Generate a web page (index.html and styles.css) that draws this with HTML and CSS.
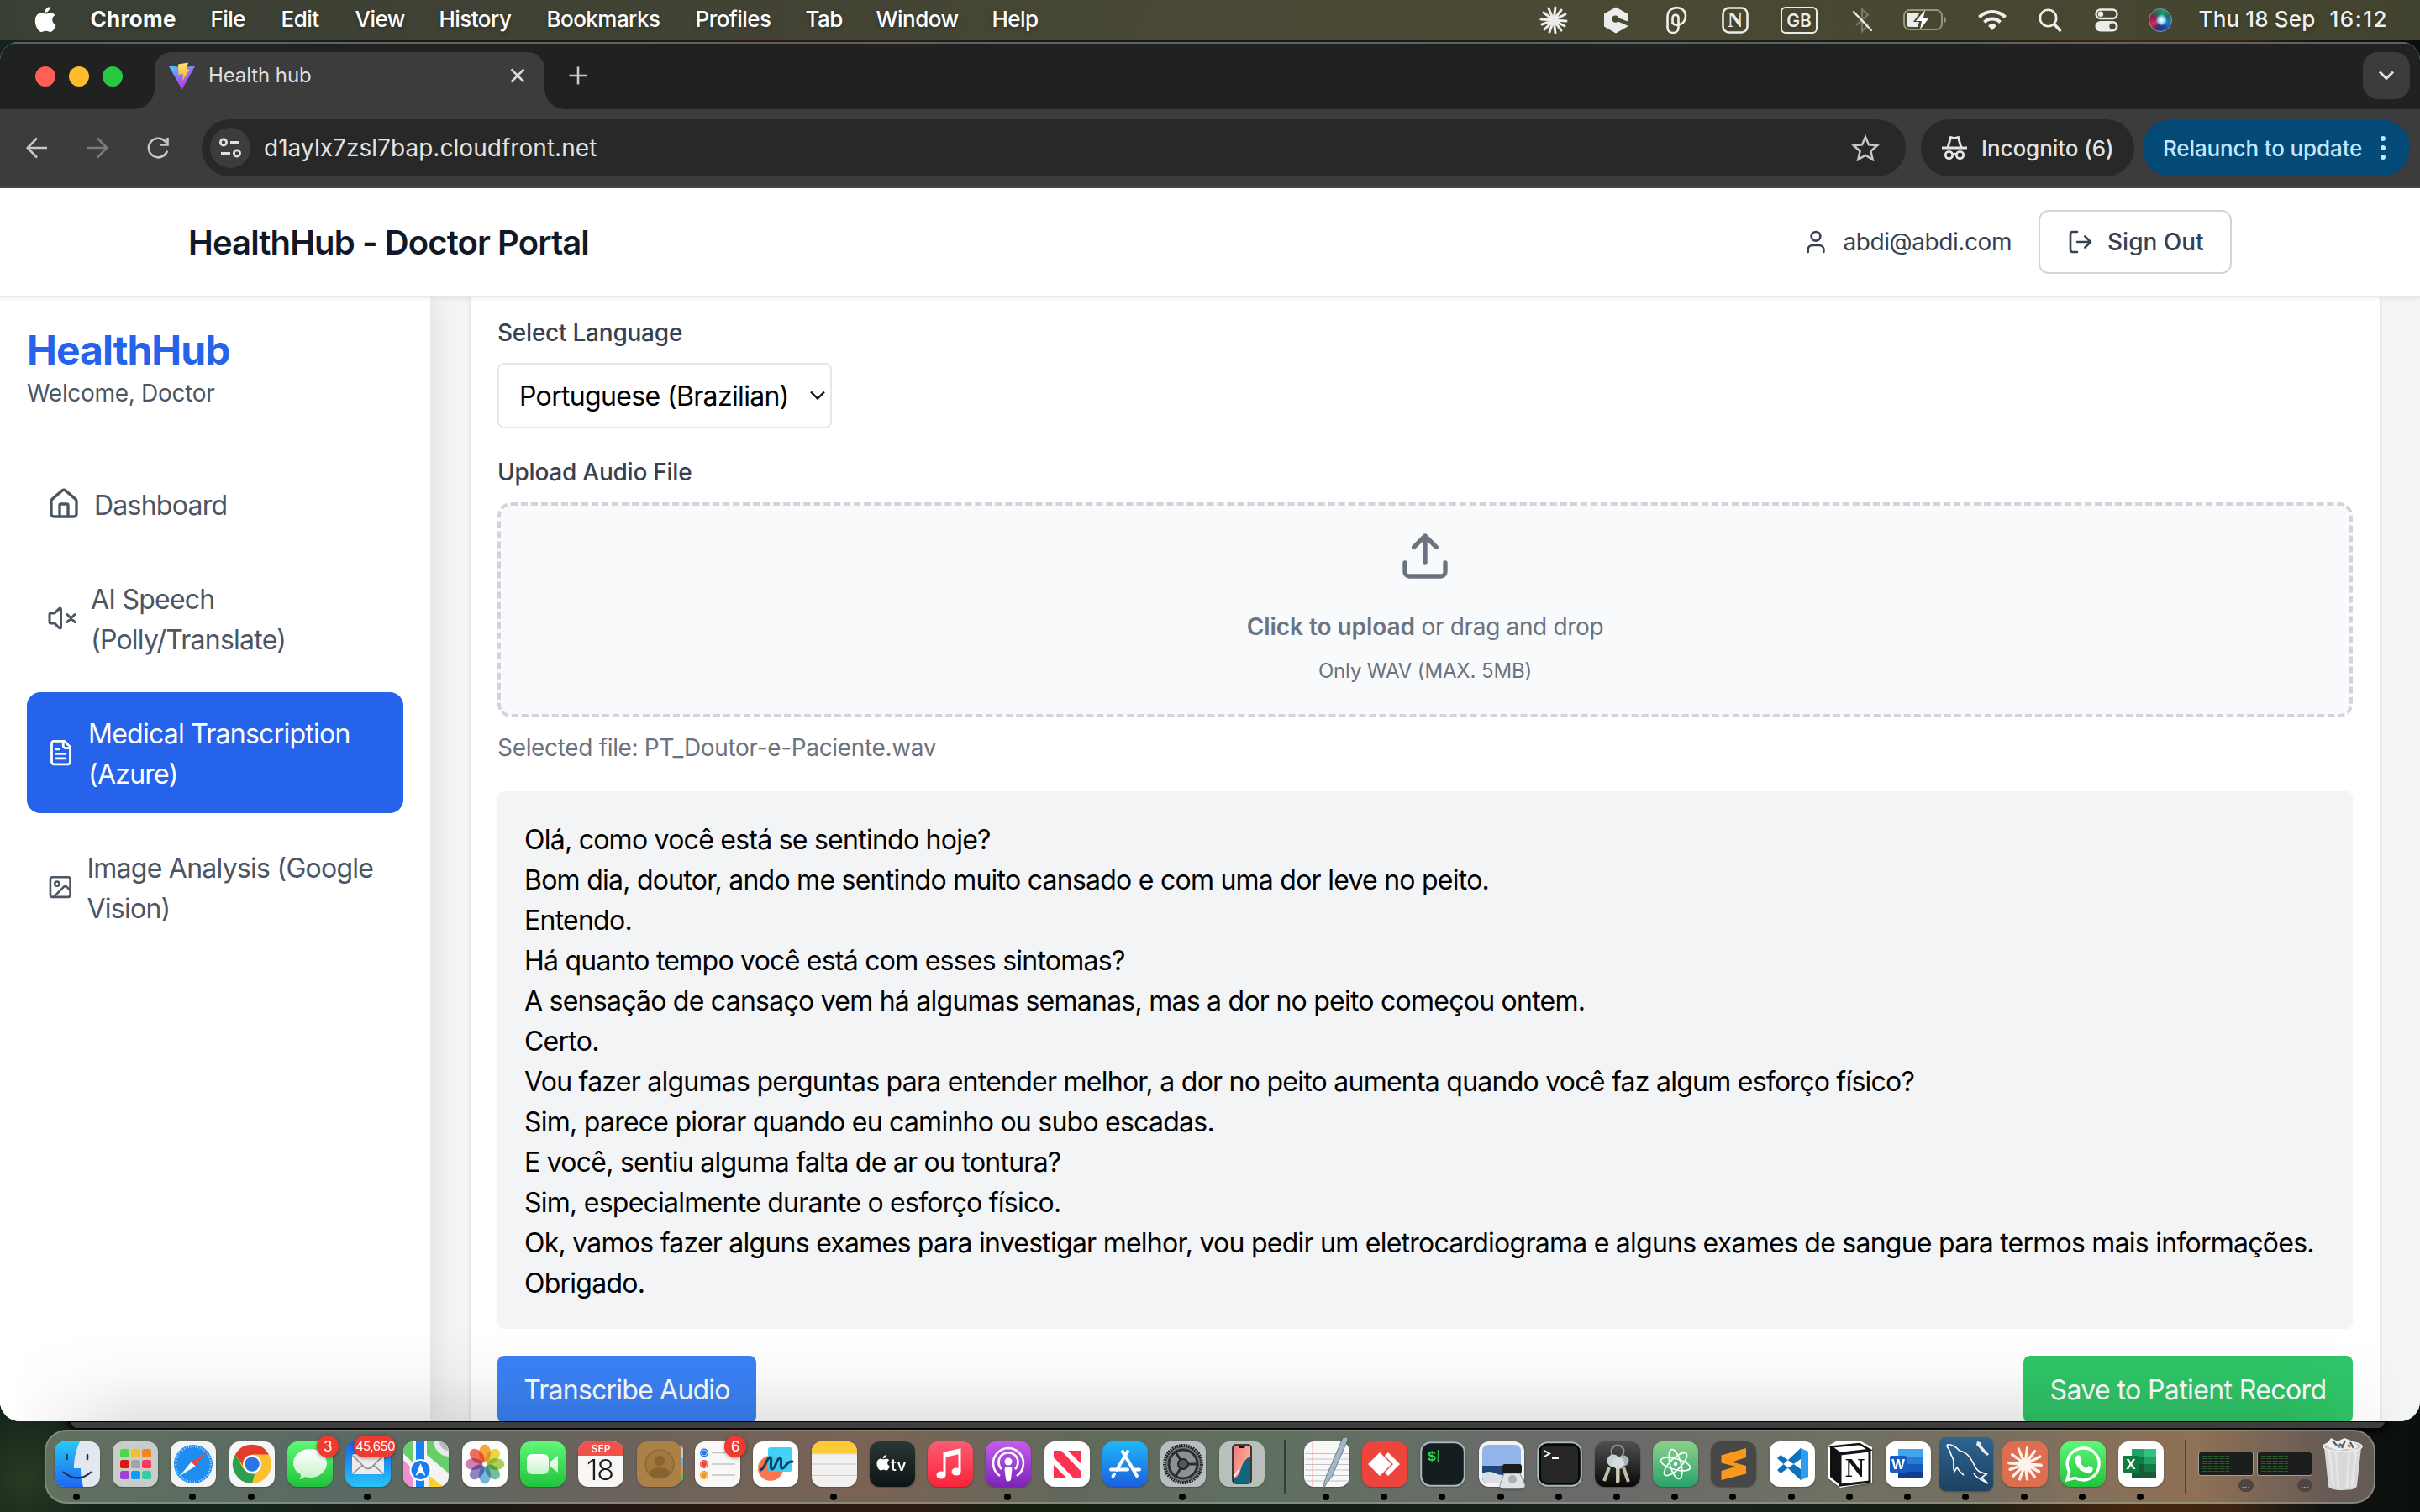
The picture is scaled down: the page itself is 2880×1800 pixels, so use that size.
FILE: index.html
```html
<!DOCTYPE html>
<html lang="en">
<head>
<meta charset="utf-8">
<title>Health hub</title>
<link rel="stylesheet" href="styles.css">
</head>
<body>
<div class="desktop">

<header class="menubar">
  <nav class="menus">
    <svg class="apple" viewBox="0 0 26 30"><path d="M18.6 0c.2 3.600-2.800 7-6.200 6.900C12.200 3.500 15.300.2 18.600 0zM13.400 8.600c1.400 0 3-1.500 5.600-1.400 2.300.1 4.200 1.100 5.500 2.900-4.900 3.100-4 9.600 1 11.600C24 26 21.700 29.800 19 29.900c-2 .1-2.900-1.200-5.300-1.200-2.500 0-3.400 1.200-5.300 1.200C4.800 30 .8 22.900.8 16.900.8 10.900 4.500 7.400 8.300 7.300c2.200 0 3.800 1.300 5.100 1.300z"/></svg>
    <b>Chrome</b><span>File</span><span>Edit</span><span>View</span><span>History</span><span>Bookmarks</span><span>Profiles</span><span>Tab</span><span>Window</span><span>Help</span>
  </nav>
  <div class="status">
    <svg width="34" height="34" viewBox="-17 -17 34 34" stroke="#ececea" stroke-width="3" stroke-linecap="round"><path d="M0 0L-6-14M0 0L2-15M0 0L9-12M0 0L14-7M0 0L15 1M0 0L13 7M0 0L9 12M0 0L2 15M0 0L-5 14M0 0L-11 11M0 0L-14 5M0 0L-15-1M0 0L-12-9"/></svg>
    <svg width="28" height="32" viewBox="0 0 28 32"><path d="M14 .5L28 8.500v9L17.500 13.500a4.200 4.200 0 1 0-1 4L28 22.500v1L14 31.500 0 23.500v-15z" fill="#ececea"/></svg>
    <svg width="26" height="34" viewBox="0 0 26 34" fill="none" stroke="#f0f0ee" stroke-width="2.600"><path d="M8.500 21V14.500c0-5 7-5 7 0V26c0 8-13 8-13 0V13C2.500-1.500 24-1 24 11.500 24 20 18 23.500 12 22.500c-2.500-.4-3.500-1-3.500-3"/></svg>
    <svg width="32" height="34" viewBox="0 0 32 34"><rect x="1.500" y="2.500" width="29" height="29" rx="7" fill="none" stroke="#ececea" stroke-width="2.600"/><text x="16" y="25" class="menu-n">N</text></svg>
    <svg width="44" height="34" viewBox="0 0 44 34"><rect x="1" y="2" width="42" height="30" rx="5" fill="none" stroke="#ececea" stroke-width="2"/><text x="22" y="24.500" class="menu-gb">GB</text></svg>
    <svg width="24" height="32" viewBox="0 0 24 32" fill="none" stroke-width="2.200"><path d="M3 9l15 13-7 7V3l7 6.500L4 22" stroke="#797967"/><path d="M1 6l21 22" stroke="#ececea" stroke-linecap="round"/></svg>
    <svg width="52" height="28" viewBox="0 0 52 28"><rect x="1" y="2" width="45" height="23" rx="6.500" fill="none" stroke="#94947f" stroke-width="2"/><path d="M48 9c4 2 4 7 0 9z" fill="#94947f"/><path d="M8 5h12L12 16h7l-2 6H8a4 4 0 0 1-4-4V9a4 4 0 0 1 4-4z" fill="#ececea"/><path d="M26 2L15 15h7l-2 10L31 11h-7z" fill="#fff"/></svg>
    <svg width="36" height="28" viewBox="0 0 36 28" fill="none" stroke="#f0f0ee" stroke-width="4"><path d="M2.500 10.500a22 22 0 0 1 31 0M8.500 16.500a13.500 13.500 0 0 1 19 0"/><path d="M18 26l-5-5.500a7.300 7.300 0 0 1 10 0z" fill="#f0f0ee" stroke="none"/></svg>
    <svg width="28" height="28" viewBox="0 0 28 28" fill="none" stroke="#f0f0ee" stroke-linecap="round"><circle cx="11.500" cy="11.500" r="9.700" stroke-width="2.600"/><path d="M19 19l6.500 7" stroke-width="3.400"/></svg>
    <svg width="28" height="28" viewBox="0 0 28 28"><rect x="1.500" y="1.500" width="25" height="10.500" rx="5.200" fill="none" stroke="#ececea" stroke-width="2.400"/><circle cx="7" cy="6.700" r="3.200" fill="#ececea"/><rect x=".5" y="15" width="27" height="12.500" rx="6.200" fill="#ececea"/><circle cx="21" cy="21.200" r="3.600" fill="#47462f"/></svg>
    <span class="siri"></span>
    <span class="date">Thu 18 Sep</span><span class="clock">16:12</span>
  </div>
</header>

<main class="window">
  <div class="tabstrip">
    <div class="lights"><i class="red"></i><i class="yellow"></i><i class="green"></i></div>
    <div class="tab">
      <svg width="33" height="33" viewBox="0 0 33 33"><defs><linearGradient id="v1" x1="0" y1="0" x2=".6" y2="1"><stop offset="0" stop-color="#41d1ff"/><stop offset=".9" stop-color="#bd34fe"/></linearGradient><linearGradient id="v2" x1="0" y1="0" x2="0" y2="1"><stop offset="0" stop-color="#ffea83"/><stop offset="1" stop-color="#ffa800"/></linearGradient></defs><path d="M.5 4L16.500 32.500 32.500 4 18 6.500z" fill="url(#v1)"/><path d="M12 2.500L24 .5 21.500 9l4-.5L17 23l1-9-5.500 1z" fill="url(#v2)"/></svg>
      <span>Health hub</span>
      <svg width="18" height="18" viewBox="0 0 18 18" fill="none" stroke="#dcdcdc" stroke-width="2.500"><path d="M1.500 1.500l15 15M16.500 1.500l-15 15"/></svg>
    </div>
    <svg class="plus" width="22" height="22" viewBox="0 0 22 22" fill="none" stroke="#c9c9c9" stroke-width="2.600"><path d="M11 .5v21M.5 11h21"/></svg>
    <div class="tabsearch"><svg width="20" height="12" viewBox="0 0 20 12" fill="none" stroke="#e3e3e3" stroke-width="3"><path d="M2 1.500l8 8 8-8"/></svg></div>
  </div>
  <div class="toolbar">
    <svg class="nav-ico" viewBox="0 0 26 26" fill="none" stroke="#c7c7c7" stroke-width="2.600"><path d="M25 13H2M13 1.500L1.800 13 13 24.500"/></svg>
    <svg class="nav-ico" viewBox="0 0 26 26" fill="none" stroke="#7b7b7b" stroke-width="2.600"><path d="M1 13h23M13 1.500L24.200 13 13 24.500"/></svg>
    <svg class="nav-ico" viewBox="0 0 26 26" fill="none" stroke="#c7c7c7" stroke-width="2.600"><path d="M24 16.500A11.300 11.300 0 1 1 22.500 6.500M24.500 1v8.500H16"/></svg>
    <div class="omnibox">
      <span class="site-info"><svg width="26" height="24" viewBox="0 0 26 24" fill="none" stroke="#e0e0e0" stroke-width="2.800"><circle cx="5" cy="5.500" r="3.600"/><path d="M13 5.500h11M2 18.500h11"/><circle cx="21" cy="18.500" r="3.600"/></svg></span>
      <span class="url">d1aylx7zsl7bap.cloudfront.net</span>
      <svg width="34" height="32" viewBox="0 0 34 32" fill="none" stroke="#c7c7c7" stroke-width="2.500"><path d="M17 3l4 9.400 10 .9-7.600 6.700 2.300 10L17 24.700 8.300 30l2.300-10L3 13.300l10-.9z"/></svg>
    </div>
    <div class="incog"><svg width="30" height="30" viewBox="0 0 30 30" fill="none" stroke="#e3e3e3" stroke-width="2.800"><path d="M0 15h30M7 15l3.500-12.500 4.500 1 4.500-1L23 15"/><circle cx="8.500" cy="23.500" r="4.200"/><circle cx="21.500" cy="23.500" r="4.200"/><path d="M12.500 23q2.500-1.500 5 0"/></svg><span>Incognito (6)</span></div>
    <div class="relaunch"><span>Relaunch to update</span><i></i></div>
  </div>

  <div class="page-header">
    <h1>HealthHub - Doctor Portal</h1>
    <div class="account">
      <svg width="32" height="32" viewBox="0 0 24 24" class="line"><path d="M19 21v-2a4 4 0 0 0-4-4H9a4 4 0 0 0-4 4v2"/><circle cx="12" cy="7" r="4"/></svg>
      <span class="email">abdi@abdi.com</span>
      <button class="signout"><svg width="32" height="32" viewBox="0 0 24 24" class="line"><path d="M9 21H5a2 2 0 0 1-2-2V5a2 2 0 0 1 2-2h4M16 17l5-5-5-5M21 12H9"/></svg><span>Sign Out</span></button>
    </div>
  </div>

  <div class="body">
    <aside class="sidebar">
      <h2>HealthHub</h2>
      <p class="welcome">Welcome, Doctor</p>
      <nav class="side-nav">
        <a class="item"><svg width="40" height="40" viewBox="0 0 24 24" class="line"><path d="M15 21v-8a1 1 0 0 0-1-1h-4a1 1 0 0 0-1 1v8"/><path d="M3 10a2 2 0 0 1 .709-1.528l7-5.999a2 2 0 0 1 2.582 0l7 5.999A2 2 0 0 1 21 10v9a2 2 0 0 1-2 2H5a2 2 0 0 1-2-2z"/></svg><span>Dashboard</span></a>
        <a class="item"><svg width="36" height="40" viewBox="0 0 24 24" class="line"><path d="M11 4.702a.705.705 0 0 0-1.203-.498L6.413 7.587A1.400 1.400 0 0 1 5.416 8H3a1 1 0 0 0-1 1v6a1 1 0 0 0 1 1h2.416a1.400 1.400 0 0 1 .997.413l3.383 3.384A.705.705 0 0 0 11 19.298zM22 9l-6 6M16 9l6 6"/></svg><span>AI Speech<br>(Polly/Translate)</span></a>
        <a class="item active"><svg width="33" height="40" viewBox="0 0 24 24" class="line"><path d="M15 2H6a2 2 0 0 0-2 2v16a2 2 0 0 0 2 2h12a2 2 0 0 0 2-2V7z"/><path d="M14 2v4a2 2 0 0 0 2 2h4M10 9H8M16 13H8M16 17H8"/></svg><span>Medical Transcription<br>(Azure)</span></a>
        <a class="item"><svg width="31.500" height="40" viewBox="0 0 24 24" class="line"><rect width="18" height="18" x="3" y="3" rx="2"/><circle cx="9" cy="9" r="2"/><path d="m21 15-3.086-3.086a2 2 0 0 0-2.828 0L6 21"/></svg><span>Image Analysis (Google<br>Vision)</span></a>
      </nav>
    </aside>
    <section class="content">
      <div class="card">
        <label>Select Language</label>
        <div class="select"><span>Portuguese (Brazilian)</span><svg width="20" height="12" viewBox="0 0 20 12" fill="none" stroke="#111" stroke-width="2.400"><path d="M2 1.500l8 8 8-8"/></svg></div>
        <label>Upload Audio File</label>
        <div class="dropzone">
          <svg width="64" height="64" viewBox="0 0 24 24" class="line"><path d="M21 15v4a2 2 0 0 1-2 2H5a2 2 0 0 1-2-2v-4M17 8l-5-5-5 5M12 3v12"/></svg>
          <p class="hint"><b>Click to upload</b> or drag and drop</p>
          <p class="limit">Only WAV (MAX. 5MB)</p>
        </div>
        <p class="selected">Selected file: PT_Doutor-e-Paciente.wav</p>
        <div class="transcript">Olá, como você está se sentindo hoje?
Bom dia, doutor, ando me sentindo muito cansado e com uma dor leve no peito.
Entendo.
Há quanto tempo você está com esses sintomas?
A sensação de cansaço vem há algumas semanas, mas a dor no peito começou ontem.
Certo.
Vou fazer algumas perguntas para entender melhor, a dor no peito aumenta quando você faz algum esforço físico?
Sim, parece piorar quando eu caminho ou subo escadas.
E você, sentiu alguma falta de ar ou tontura?
Sim, especialmente durante o esforço físico.
Ok, vamos fazer alguns exames para investigar melhor, vou pedir um eletrocardiograma e alguns exames de sangue para termos mais informações.
Obrigado.</div>
        <div class="actions"><button class="btn blue">Transcribe Audio</button><button class="btn green">Save to Patient Record</button></div>
      </div>
    </section>
  </div>
</main>
<div class="behind"></div>

<footer class="dock">
  <div class="apps">
    <div class="app on"><svg viewBox="0 0 54 54"><defs><linearGradient id="a1" x1="0" y1="0" x2="0" y2="1"><stop offset="0" stop-color="#27c8fb"/><stop offset="1" stop-color="#1e68f0"/></linearGradient><clipPath id="sq"><rect width="54" height="54" rx="12"/></clipPath></defs><g clip-path="url(#sq)"><rect width="54" height="54" fill="#e3e8f0"/><path d="M0 0h30c-4 9-7 20-7 32h8q0 12 3 22H0z" fill="url(#a1)"/><path d="M14.500 16v5M39 16v5" stroke="#16324f" stroke-width="2.600" stroke-linecap="round"/><path d="M10 36q17 15 34 0" fill="none" stroke="#16324f" stroke-width="2.200"/></g></svg></div>
    <div class="app"><svg viewBox="0 0 54 54"><rect width="54" height="54" rx="12" fill="#c9cdca"/><rect x="9" y="9" width="11" height="10" rx="2.500" fill="#43dc46"/><rect x="22" y="9" width="11" height="10" rx="2.500" fill="#f8bd2a"/><rect x="35" y="9" width="11" height="10" rx="2.500" fill="#f5861f"/><rect x="9" y="22" width="11" height="10" rx="2.500" fill="#d8190f"/><rect x="22" y="22" width="11" height="10" rx="2.500" fill="#a0a5a7"/><rect x="35" y="22" width="11" height="10" rx="2.500" fill="#fb3859"/><rect x="9" y="35" width="11" height="10" rx="2.500" fill="#a33fd8"/><rect x="22" y="35" width="11" height="10" rx="2.500" fill="#0f9bf8"/><rect x="35" y="35" width="11" height="10" rx="2.500" fill="#35cea4"/></svg></div>
    <div class="app on"><svg viewBox="0 0 54 54"><rect width="54" height="54" rx="12" fill="#f3f3f3"/><circle cx="27" cy="27" r="23" fill="#1d8df0"/><circle cx="27" cy="27" r="21" fill="none" stroke="#b9e0fd" stroke-width="2.400" stroke-dasharray=".8 2"/><path d="M43 13L24.500 24.500l5 5z" fill="#f0453a"/><path d="M11 41l13.500-16.500 5 5z" fill="#fff"/></svg></div>
    <div class="app on"><svg viewBox="0 0 54 54"><rect width="54" height="54" rx="12" fill="#f6f6f6"/><circle cx="27" cy="27" r="23" fill="#fcbf30"/><path d="M7 15.500A23 23 0 0 1 47 15.500H27l-9 16z" fill="#e33b2e"/><path d="M7 15.500L17 33l10 6 3 0L27 50A23 23 0 0 1 7 15.500z" fill="#2da04d"/><circle cx="27" cy="27" r="11" fill="#fff"/><circle cx="27" cy="27" r="8.800" fill="#2a76e8"/></svg></div>
    <div class="app"><svg viewBox="0 0 54 54"><defs><linearGradient id="g1" x1="0" y1="0" x2="0" y2="1"><stop offset="0" stop-color="#5ff777"/><stop offset="1" stop-color="#22c33c"/></linearGradient><linearGradient id="wg" x1="0" y1="0" x2="0" y2="1"><stop offset="0" stop-color="#fff"/><stop offset="1" stop-color="#c6f3c9"/></linearGradient></defs><rect width="54" height="54" rx="12" fill="url(#g1)"/><path d="M27 9c11 0 20 7.500 20 17s-9 17-20 17q-3 0-6-1-3 3-7 3 3-3 1.500-6C10 36 7 31 7 26 7 16.500 16 9 27 9z" fill="url(#wg)"/></svg><em>3</em></div>
    <div class="app on"><svg viewBox="0 0 54 54"><defs><linearGradient id="m1" x1="0" y1="0" x2="0" y2="1"><stop offset="0" stop-color="#1c62e8"/><stop offset="1" stop-color="#28c4fa"/></linearGradient></defs><rect width="54" height="54" rx="12" fill="url(#m1)"/><rect x="8" y="15" width="38" height="24" rx="3" fill="#ececec"/><path d="M9 17l14 14q4 3 8 0l14-14M9 38l12-10M45 38L33 28" fill="none" stroke="#8a8a8a" stroke-width="1.600"/></svg><em class="wide">45,650</em></div>
    <div class="app"><svg viewBox="0 0 54 54"><g clip-path="url(#sq)"><rect width="54" height="54" fill="#f3f3f3"/><path d="M0 0h12v26L0 14zM28 0h26v38L28 16z" fill="#67cf68"/><path d="M54 0v18A19 19 0 0 1 36 0z" fill="#e8e8ea"/><path d="M54 0v11A11 11 0 0 1 43 0z" fill="#b8b8bd"/><path d="M0 22l12 12v20H0z" fill="#ee8fd0"/><path d="M30 54V40l18 14z" fill="#fbd02f"/><path d="M15 0h10v54H15z" fill="#1b80f6"/><circle cx="20.500" cy="34" r="13" fill="#fff"/><circle cx="20.500" cy="34" r="11" fill="#1a7cf3"/><path d="M20.500 26l6 15-6-4-6 4z" fill="#fff"/></g></svg></div>
    <div class="app"><svg viewBox="0 0 54 54"><rect width="54" height="54" rx="12" fill="#fdfdfd"/><g class="petals"><ellipse cx="27" cy="14" rx="7" ry="10.500" fill="#f79a1c"/><ellipse cx="27" cy="14" rx="7" ry="10.500" fill="#e3d51f" transform="rotate(45 27 27)"/><ellipse cx="27" cy="14" rx="7" ry="10.500" fill="#9ac93f" transform="rotate(90 27 27)"/><ellipse cx="27" cy="14" rx="7" ry="10.500" fill="#5bb58c" transform="rotate(135 27 27)"/><ellipse cx="27" cy="14" rx="7" ry="10.500" fill="#63a8dc" transform="rotate(180 27 27)"/><ellipse cx="27" cy="14" rx="7" ry="10.500" fill="#7a72bd" transform="rotate(225 27 27)"/><ellipse cx="27" cy="14" rx="7" ry="10.500" fill="#c66ba6" transform="rotate(270 27 27)"/><ellipse cx="27" cy="14" rx="7" ry="10.500" fill="#ee5340" transform="rotate(315 27 27)"/></g></svg></div>
    <div class="app"><svg viewBox="0 0 54 54"><rect width="54" height="54" rx="12" fill="url(#g1)"/><rect x="8" y="15" width="26" height="24" rx="6" fill="url(#wg)"/><path d="M36 24l9-7v20l-9-7z" fill="url(#wg)"/></svg></div>
    <div class="app"><svg viewBox="0 0 54 54"><g clip-path="url(#sq)"><rect width="54" height="54" fill="#f8f7f5"/><rect width="54" height="17" fill="#f0524b"/></g><text x="27" y="13" class="cal-m">SEP</text><text x="26" y="45.500" class="cal-d">18</text></svg></div>
    <div class="app"><svg viewBox="0 0 54 54"><path d="M40 6h12q3 0 3 4v10H40z" fill="#c5cbd0"/><path d="M40 20h15v10H40z" fill="#5cb5e8"/><path d="M40 30h15v8H40z" fill="#f3902c"/><path d="M40 38h15v6q0 3-3 3H40z" fill="#49ca61"/><rect width="53" height="54" rx="12" fill="#ab8148"/><circle cx="27" cy="27" r="17" fill="#a1783f" stroke="#87632f" stroke-width="1.200"/><circle cx="27" cy="23" r="6" fill="#87632f"/><path d="M14 38q3-7 13-7t13 7q-6 6-13 6t-13-6z" fill="#87632f"/></svg></div>
    <div class="app"><svg viewBox="0 0 54 54"><rect width="54" height="54" rx="12" fill="#f9f8f7"/><g fill="none" stroke-width="1.400"><circle cx="11" cy="13.500" r="4.300" stroke="#1a7cf3"/><circle cx="11" cy="27" r="4.300" stroke="#ee3f35"/><circle cx="11" cy="40" r="4.300" stroke="#f3941f"/><path d="M20 13.500h28M20 27h28M20 40h28" stroke="#c4c4c4"/></g><circle cx="11" cy="13.500" r="2.900" fill="#1a7cf3"/><circle cx="11" cy="27" r="2.900" fill="#ee3f35"/><circle cx="11" cy="40" r="2.900" fill="#f3941f"/></svg><em>6</em></div>
    <div class="app"><svg viewBox="0 0 54 54"><rect width="54" height="54" rx="12" fill="#fff"/><circle cx="21" cy="32" r="15" fill="#fb7650"/><rect x="18" y="7" width="29" height="29" rx="3" fill="#35cdf4" opacity=".93"/><path d="M9 34c6-2 6-12 11-15 4 0-1 14 3 14s5-13 9-13-1 12 3 12 5-9 12-8" fill="none" stroke="#0c4166" stroke-width="3" stroke-linecap="round"/></svg></div>
    <div class="app on"><svg viewBox="0 0 54 54"><g clip-path="url(#sq)"><rect width="54" height="54" fill="#f2f1ef"/><rect width="54" height="14" fill="#fcca35"/><path d="M0 15h54M0 27h54M0 40.500h54" stroke="#c9c9c9" stroke-width="1.200"/></g></svg></div>
    <div class="app"><svg viewBox="0 0 54 54"><defs><linearGradient id="tv" x1="0" y1="0" x2="0" y2="1"><stop offset="0" stop-color="#273934"/><stop offset="1" stop-color="#0d1415"/></linearGradient></defs><rect width="54" height="54" rx="12" fill="url(#tv)"/><path transform="translate(8 16) scale(.62)" fill="#fff" d="M18.600 0c.2 3.600-2.800 7-6.200 6.900C12.200 3.500 15.300.2 18.600 0zM13.400 8.600c1.400 0 3-1.500 5.600-1.400 2.300.1 4.200 1.100 5.500 2.900-4.900 3.100-4 9.600 1 11.600C24 26 21.700 29.800 19 29.900c-2 .1-2.900-1.200-5.300-1.200-2.500 0-3.400 1.200-5.300 1.200C4.800 30 .8 22.900.8 16.900.8 10.900 4.500 7.400 8.300 7.300c2.200 0 3.800 1.300 5.100 1.300z"/><text x="25" y="34.500" class="tvt">tv</text></svg></div>
    <div class="app"><svg viewBox="0 0 54 54"><defs><linearGradient id="mu" x1="0" y1="0" x2="0" y2="1"><stop offset="0" stop-color="#fb5c74"/><stop offset="1" stop-color="#fa2339"/></linearGradient></defs><rect width="54" height="54" rx="12" fill="url(#mu)"/><path d="M20 40V14l18-4v26" fill="none" stroke="#fff" stroke-width="3"/><path d="M20 13l18-4v6l-18 4z" fill="#fff"/><ellipse cx="16" cy="40" rx="5.500" ry="4.500" fill="#fff"/><ellipse cx="34" cy="36" rx="5.500" ry="4.500" fill="#fff"/></svg></div>
    <div class="app on"><svg viewBox="0 0 54 54"><defs><linearGradient id="po" x1="0" y1="0" x2="0" y2="1"><stop offset="0" stop-color="#c55ced"/><stop offset="1" stop-color="#7a25b8"/></linearGradient></defs><rect width="54" height="54" rx="12" fill="url(#po)"/><g fill="none" stroke="#fff" stroke-width="2.600"><path d="M17 41a18 18 0 1 1 20 0"/><path d="M19 33a11.500 11.500 0 1 1 16 0"/></g><circle cx="27" cy="24" r="4.500" fill="#fff"/><path d="M22.500 33q0-3 4.500-3t4.500 3l-1.500 12q-.5 2.500-3 2.500t-3-2.500z" fill="#fff"/></svg></div>
    <div class="app"><svg viewBox="0 0 54 54"><rect width="54" height="54" rx="12" fill="#fff"/><path d="M11 11h9l23 24v8h-9L11 19zM28 11h15v15zM11 28l15 15H11z" fill="#fb3353"/></svg></div>
    <div class="app"><svg viewBox="0 0 54 54"><defs><linearGradient id="as" x1="0" y1="0" x2="0" y2="1"><stop offset="0" stop-color="#1fb8f6"/><stop offset="1" stop-color="#1c5fe0"/></linearGradient></defs><rect width="54" height="54" rx="12" fill="url(#as)"/><path d="M24 12l17 29M30 12L17 34M14 39l-1.500 2.500M10 33.500h20M37 33.500h7" fill="none" stroke="#fff" stroke-width="4" stroke-linecap="round"/></svg></div>
    <div class="app on"><svg viewBox="0 0 54 54"><rect width="54" height="54" rx="12" fill="#b7bec2"/><circle cx="27" cy="27" r="22" fill="#777a7d" stroke="#232425" stroke-width="4" stroke-dasharray="1.800 1"/><circle cx="27" cy="27" r="17" fill="#8e9194" stroke="#2c2d2f" stroke-width="3"/><circle cx="27" cy="27" r="6" fill="#55585a" stroke="#222" stroke-width="2"/><path d="M33 27h11M24 32l-6 9.500M24 22l-6-9.500" stroke="#2a2b2c" stroke-width="3"/></svg></div>
    <div class="app"><svg viewBox="0 0 54 54"><defs><linearGradient id="ip" x1="0" y1="0" x2="1" y2=".6"><stop offset="0" stop-color="#f77476"/><stop offset="1" stop-color="#f7b9a0"/></linearGradient></defs><rect width="54" height="54" rx="12" fill="#b9bfba"/><rect x="16" y="4" width="22" height="46" rx="4" fill="url(#ip)" stroke="#1a1a1a" stroke-width="1.600"/><path d="M37 18v28q0 3-3 3H20q-3 0-3-3v-2q6-1 9-12t11-14z" fill="#11657f"/><path d="M17 43q5-4 8-12l-8 10z" fill="#fff"/><rect x="23.500" y="5.500" width="7" height="2.400" rx="1.200" fill="#111"/></svg></div>
  </div>
  <i class="sep"></i>
  <div class="apps second">
    <div class="app on"><svg viewBox="0 0 54 54"><rect width="54" height="54" rx="12" fill="#f8f8f8"/><path d="M1 14.500h52M1 21h52M1 27.500h52M1 34h52M1 40.500h52M1 47h52" stroke="#c1c1c4" stroke-width="1.200"/><path d="M10 1v52" stroke="#f3a9a4"/><path d="M46-4l5-1 1 3-19 44-7 9-3 6 1-8 3-9z" fill="#a3b7c8" stroke="#5f6a75" stroke-width=".8"/></svg></div>
    <div class="app on"><svg viewBox="0 0 54 54"><rect width="54" height="54" rx="12" fill="#ef443b"/><path d="M21 13l14 14-14 14L7 27zM31 13l14 14-14 14-4-4 10-10-10-10z" fill="#fff"/></svg></div>
    <div class="app on"><svg viewBox="0 0 54 54"><rect x="1.200" y="1.200" width="51.600" height="51.600" rx="11.500" fill="#141d1f" stroke="#a9b8bc" stroke-width="2"/><text x="9" y="23" class="dollar">$</text><path d="M21.500 10v14" stroke="#25b63f" stroke-width="1.600"/></svg></div>
    <div class="app on"><svg viewBox="0 0 54 54"><rect width="54" height="54" rx="12" fill="#f3f3f3"/><path d="M4 12q0-8 8-8h30q8 0 8 8v18H4z" fill="#93b4e8"/><path d="M4 29h46v13q0 8-8 8H12q-8 0-8-8z" fill="#1f4779"/><path d="M4 38q8-4 16 0t16 0v12H12q-8 0-8-8z" fill="#d8dfe6"/><rect x="28" y="27" width="23" height="11" rx="3" fill="#1b1c1e"/><path d="M30 38h19l6 14q0 4-5 4H29q-5 0-4-4z" fill="#dfe3e6" stroke="#8f969b"/><circle cx="40" cy="45" r="5" fill="#a9b0b5"/></svg></div>
    <div class="app on"><svg viewBox="0 0 54 54"><rect x="1.200" y="1.200" width="51.600" height="51.600" rx="11.500" fill="#060606" stroke="#a9b8bc" stroke-width="2"/><rect x="5" y="5" width="44" height="44" rx="6" fill="#262626"/><path d="M9 11l6 3.500-6 3.500M18 20h8" fill="none" stroke="#fff" stroke-width="2"/></svg></div>
    <div class="app on"><svg viewBox="0 0 54 54"><defs><linearGradient id="kc" x1="0" y1="0" x2="0" y2="1"><stop offset="0" stop-color="#505053"/><stop offset="1" stop-color="#080808"/></linearGradient></defs><rect width="54" height="54" rx="12" fill="url(#kc)"/><circle cx="27" cy="12" r="7.500" fill="none" stroke="#9a927d" stroke-width="2"/><path d="M17 31l-6 16M27 32v17M34 31l6 17" stroke="#c4bda8" stroke-width="4"/><circle cx="22" cy="23" r="7.500" fill="#c8d2d5"/><circle cx="34" cy="23" r="6.500" fill="#aab5ba"/><circle cx="28" cy="26" r="7" fill="#d4dcde"/><path d="M28 28v20" stroke="#d5cfbb" stroke-width="3"/></svg></div>
    <div class="app on"><svg viewBox="0 0 54 54"><defs><linearGradient id="at" x1="0" y1="0" x2="0" y2="1"><stop offset="0" stop-color="#8bd08a"/><stop offset="1" stop-color="#28a46c"/></linearGradient></defs><rect width="54" height="54" rx="12" fill="url(#at)"/><g fill="none" stroke="#fff" stroke-width="1.700"><ellipse cx="27" cy="27" rx="18" ry="6.500" transform="rotate(15 27 27)"/><ellipse cx="27" cy="27" rx="18" ry="6.500" transform="rotate(75 27 27)"/><ellipse cx="27" cy="27" rx="18" ry="6.500" transform="rotate(-45 27 27)"/></g><circle cx="27" cy="27" r="2.300" fill="#fff"/></svg></div>
    <div class="app on"><svg viewBox="0 0 54 54"><rect width="54" height="54" rx="12" fill="#474747"/><path d="M42 8v11l-17 5.500L42 29v9.500L12.500 46V35l17-5L12.500 25.500V16.500z" fill="#fb981c"/></svg></div>
    <div class="app on"><svg viewBox="0 0 54 54"><rect width="54" height="54" rx="12" fill="#fff"/><path d="M37 8l9 4v30l-9 4z" fill="#2c9df0"/><path d="M37 8L9 34l4 4 24-17zM37 46L9 20l4-4 24 17z" fill="#0d72bd"/></svg></div>
    <div class="app on"><svg viewBox="0 0 54 54"><path d="M1 5l9-5 30 0 13 7v42l-38 6L1 44z" fill="#fff"/><path d="M4 6.500L38 3l12 7-35 4z" fill="#fff" stroke="#111" stroke-width="2.600"/><path d="M3 6l12 9v37L3 42z" fill="#111"/><path d="M15 15l35-4v37l-35 4z" fill="#fff" stroke="#111" stroke-width="3"/><text x="32.500" y="42" class="notion">N</text></svg></div>
    <div class="app on"><svg viewBox="0 0 54 54"><rect width="54" height="54" rx="12" fill="#fff"/><path d="M15 9h29v9H15z" fill="#41a5ee"/><path d="M15 18h29v9H15z" fill="#2b7cd3"/><path d="M15 27h29v9H15z" fill="#185abd"/><path d="M15 36h29v8H15z" fill="#103f91"/><rect x="5" y="17" width="20" height="20" rx="2" fill="#1a5dbe"/><text x="15" y="32.500" class="office">W</text></svg></div>
    <div class="app on big"><svg viewBox="0 0 64 64"><defs><linearGradient id="my" x1="0" y1="0" x2="0" y2="1"><stop offset="0" stop-color="#2f6490"/><stop offset="1" stop-color="#1b4262"/></linearGradient></defs><rect width="64" height="64" rx="8" fill="url(#my)"/><path d="M9 9c6-1 10 2 15 7 6 1 12 6 16 14 2 5 4 9 8 11l8 3-6 4 8 7c-7-4-14-6-17-12M9 9c0 4 3 5 4 9 1 5 4 6 4 11s-1 8 1 12c1-2 2-4 3-5 2 4 4 6 8 9" fill="none" stroke="#fff" stroke-width="1.600"/><path d="M45 5l4 1 1 4 5 6 4 4-2 2-5-4-5-6-3-3z" fill="#e7edf2"/></svg></div>
    <div class="app on"><svg viewBox="0 0 54 54"><rect width="54" height="54" rx="12" fill="#dd6f50"/><path transform="translate(27 27) scale(1.280)" d="M0 0L-6-14M0 0L2-15M0 0L9-12M0 0L14-7M0 0L15 1M0 0L13 7M0 0L9 12M0 0L2 14M0 0L-5 14M0 0L-11 11M0 0L-14 5M0 0L-15-1M0 0L-12-9" stroke="#fff4ec" stroke-width="2.600" stroke-linecap="round"/></svg></div>
    <div class="app on"><svg viewBox="0 0 54 54"><rect width="54" height="54" rx="12" fill="url(#g1)"/><path d="M8 46l2.600-10A19 19 0 1 1 18 43.400z" fill="none" stroke="#fff" stroke-width="3.400"/><path d="M20 17q2-1.500 3.500.5l2 4.500-2 3q3 5 7.500 7l2.500-3 5 2.500q1 5-5 6.500Q21 36 17.500 24q-.5-5 2.500-7z" fill="#fff"/></svg></div>
    <div class="app on"><svg viewBox="0 0 54 54"><rect width="54" height="54" rx="12" fill="#fff"/><path d="M16 9h15v9H16z" fill="#21a366"/><path d="M31 9h14v9H31z" fill="#33c481"/><path d="M16 18h15v9H16z" fill="#107c41"/><path d="M31 18h14v9H31z" fill="#21a366"/><path d="M16 27h29v17H16z" fill="#185c37"/><path d="M31 27h14v9H31z" fill="#107c41"/><rect x="5" y="17" width="20" height="20" rx="2" fill="#107c41"/><text x="15" y="32.500" class="office">X</text></svg></div>
  </div>
  <i class="sep warm"></i>
  <div class="minis">
    <div class="mini"><span></span><u>...</u></div>
    <div class="mini"><span></span><u>...</u></div>
  </div>
  <svg class="trash" width="48" height="64" viewBox="0 0 48 64"><path d="M2 12l5 46q1 5 17 5t17-5l5-46z" fill="#d9d9d8"/><path d="M8 15l5 43M16 17l3 44M32 17l-3 44M40 15l-5 43" stroke="#e6e6e5" stroke-width="3"/><ellipse cx="24" cy="11" rx="23" ry="6" fill="#c4c4c2" stroke="#f0f0f0" stroke-width="1.600"/><path d="M4 10L10 1l8 4 8-4 8 3 9 7-6 4-9-1-9 2-9-3z" fill="#efefef"/><path d="M12 4l5 6M27 4l-4 9M33 6l4 7M20 8l5 3" stroke="#55606a" stroke-width="2.400"/><path d="M17 9l4 3" stroke="#2aa5b8" stroke-width="3"/><path d="M30 9l3 3" stroke="#d2762d" stroke-width="3"/></svg>
</footer>
</div>
</body>
</html>
```
FILE: styles.css
```css
* { box-sizing: border-box; }
body { margin: 0; font-family: Inter, "Liberation Sans", sans-serif; }
h1, h2, p { margin: 0; }
button { font-family: inherit; margin: 0; }
svg { display: block; flex: none; }
svg.line { fill: none; stroke: currentColor; stroke-width: 2; stroke-linecap: round; stroke-linejoin: round; }

.desktop {
  width: 2880px; height: 1800px; overflow: hidden;
  display: flex; flex-direction: column;
  background:
    radial-gradient(circle at 30px 1760px, #2a3a22, transparent 90px),
    linear-gradient(90deg, #14231a 0, #15261b 300px, #1a1712 520px, #2a1a12 900px, #2a1c12 1100px, #15200f 1200px, #131d14 1500px, #18241b 1950px, #141d12 2300px, #45260f 2540px, #3a2410 2660px, #101410 2760px, #0b0f0d 100%);
}

/* macOS menu bar */
.menubar {
  height: 48px; margin-bottom: 2px; flex: none;
  display: flex; justify-content: space-between; align-items: center;
  padding: 0 0 0 41px;
  background: linear-gradient(90deg, #3a4035 0, #424334 900px, #494935 1500px, #4a4934 1900px, #43442f 100%);
  color: #fff; font-size: 26px; font-weight: 500;
  text-shadow: 0 2px 5px rgba(0,0,0,.3);
}
.menus {
  display: grid; align-items: center; letter-spacing: -.021em; white-space: nowrap;
  grid-template-columns: 66.500px 143px 84px 88px 100px 128px 177px 131px 84px 138px 60px;
}
.menus b, .menus span, .date, .clock { padding-bottom: 3px; }
.menus b { letter-spacing: .012em; }
.apple { width: 26px; height: 30px; fill: #fff; margin-top: -3px; }
.status {
  display: grid; align-items: center; white-space: nowrap; color: #f0f0ee;
  grid-template-columns: 77px 73px 67px 70px 86px 60px 88px 73px 67px 64px 60px 156px 107.500px;
}
.clock { letter-spacing: .06em; }
.date { letter-spacing: .006em; }
.menu-n { font: 700 25px "Liberation Serif", serif; fill: #ececea; text-anchor: middle; }
.menu-gb { font: 600 21px Inter, sans-serif; fill: #ececea; text-anchor: middle; }
.siri {
  width: 28px; height: 28px; border-radius: 50%; border: 1px solid #8a92a0;
  background: radial-gradient(circle at 55% 50%, #fff 0, #9fe0ff 18%, transparent 36%), conic-gradient(from 20deg, #15a06c, #1a6b62, #2476c0, #1743a0, #3b2d6e, #d12b5f, #8c1d45, #2a6d5c, #15a06c);
}

/* browser window */
.window {
  height: 1642px; flex: none; overflow: hidden; position: relative;
  display: flex; flex-direction: column;
  border-radius: 22px 22px 24px 24px; background: #fff;
}
.window::after {
  content: ""; position: absolute; left: 0; right: 0; bottom: 0; height: 110px; pointer-events: none;
  background: linear-gradient(transparent, rgba(0,0,0,.025) 50%, rgba(0,0,0,.1));
  -webkit-mask: linear-gradient(90deg, transparent 10px, #000 160px, #000 2700px, transparent 2860px);
  mask: linear-gradient(90deg, transparent 10px, #000 160px, #000 2700px, transparent 2860px);
}
.tabstrip {
  height: 80px; flex: none; background: #1f2221; border-top: 2px solid #5f6261;
  display: flex; align-items: flex-start; padding: 10px 12px 0 42px;
}
.lights { display: flex; gap: 16px; padding-top: 17px; width: 142px; }
.lights i { width: 24px; height: 24px; border-radius: 50%; }
.red { background: #ff5f57; }
.yellow { background: #febc2e; }
.green { background: #28c840; }
.tab {
  width: 464px; height: 68px; border-radius: 20px 20px 0 0; background: #3c3c3c; position: relative;
  display: flex; align-items: center; gap: 15px; padding: 0 23px 12px 16px;
  font-size: 24px; letter-spacing: -.004em; color: #dfdfdf;
}
.tab::before, .tab::after { content: ""; position: absolute; bottom: 0; width: 24px; height: 24px; }
.tab::before { left: -24px; background: radial-gradient(circle at 0 0, transparent 23.500px, #3c3c3c 24px); }
.tab::after { right: -24px; background: radial-gradient(circle at 100% 0, transparent 23.500px, #3c3c3c 24px); }
.tab span { flex: 1; padding-bottom: 1px; }
.plus { margin: 17px 0 0 29px; }
.tabsearch { margin-left: auto; width: 56px; height: 56px; border-radius: 18px; background: #3c3c3c; display: flex; align-items: center; justify-content: center; }
.toolbar {
  height: 94px; flex: none; background: #3c3c3c; border-bottom: 2px solid #474747;
  display: flex; align-items: center; padding: 0 12px 0 31px; color: #e3e3e3;
}
.nav-ico { width: 26px; height: 26px; margin-right: 46px; }
.omnibox { width: 2028px; height: 68px; margin-left: -7px; border-radius: 34px; background: #282828; display: flex; align-items: center; padding: 0 31px 0 10px; font-size: 28px; }
.site-info { width: 48px; height: 48px; border-radius: 50%; background: #3c3c3c; display: flex; align-items: center; justify-content: center; }
.url { flex: 1; padding-left: 16px; letter-spacing: .0015em; }
.incog { width: 254px; height: 68px; margin-left: 18px; border-radius: 34px; background: #282828; display: flex; align-items: center; gap: 17px; padding-left: 25px; font-size: 26px; font-weight: 500; letter-spacing: -.003em; white-space: nowrap; }
.relaunch { width: 318px; height: 68px; margin-left: 10px; border-radius: 34px; background: #034a77; color: #c2e7ff; display: flex; align-items: center; gap: 22px; padding-left: 24px; font-size: 26px; font-weight: 500; letter-spacing: -.005em; white-space: nowrap; }
.relaunch i { width: 6px; height: 6px; border-radius: 50%; background: #c2e7ff; box-shadow: 0 -11px #c2e7ff, 0 11px #c2e7ff; }

/* page header */
.page-header {
  height: 130px; flex: none; position: relative; z-index: 1; background: #fff;
  border-bottom: 2px solid #e5e7eb; box-shadow: 0 2px 4px rgba(0,0,0,.06);
  display: flex; align-items: center; justify-content: space-between; padding: 0 224px; color: #374151;
}
.page-header h1 { font-size: 40px; font-weight: 600; letter-spacing: -.0225em; color: #111827; white-space: nowrap; }
.account { display: flex; align-items: center; font-size: 28px; }
.email { margin: 0 32px 0 16px; letter-spacing: -.015em; }
.signout { width: 230px; height: 76px; border: 2px solid #d1d5db; border-radius: 12px; background: #fff; color: #374151; display: flex; align-items: center; gap: 16px; padding: 0 0 0 32px; font-size: 28px; font-weight: 500; white-space: nowrap; }

/* app body */
.body { flex: 1; min-height: 0; display: flex; background: #f3f4f6; }
.sidebar { width: 512px; flex: none; background: #fff; box-shadow: 6px 0 30px rgba(0,0,0,.08); padding: 31px 32px; color: #4b5563; }
.sidebar h2 { font-size: 48px; line-height: 64px; font-weight: 700; letter-spacing: -.02em; color: #2563eb; }
.welcome { margin-top: -1px; font-size: 28px; line-height: 40px; letter-spacing: -.011em; }
.side-nav { display: flex; flex-direction: column; gap: 16px; margin-top: 64px; }
.item { display: flex; align-items: center; gap: 16px; padding: 24px; font-size: 32px; line-height: 48px; letter-spacing: -.0235em; border-radius: 16px; white-space: nowrap; }
.item span { padding-top: 2px; margin-bottom: -2px; }
.item.active { background: #2563eb; color: #fff; }
.content { flex: 1; padding: 0 48px; }
.card { height: 1338px; overflow: hidden; background: #fff; padding: 22px 32px 0; box-shadow: 0 0 4px rgba(0,0,0,.14); }
.card label { display: block; font-size: 28px; font-weight: 500; line-height: 40px; letter-spacing: -.0085em; color: #374151; margin-bottom: 16px; }
.select { width: 398px; height: 78px; margin-bottom: 32px; border: 2px solid #e5e7eb; border-radius: 8px; display: flex; align-items: center; justify-content: space-between; padding: 0 5px 0 24px; font-size: 32px; letter-spacing: -.0205em; white-space: nowrap; }
.select span { padding-top: 1px; }
.dropzone { height: 256px; border: 4px dashed #d1d5db; border-radius: 16px; background: #f9fafb; color: #6b7280; display: flex; flex-direction: column; align-items: center; padding-top: 28px; }
.hint { margin-top: 32px; font-size: 28px; line-height: 40px; letter-spacing: -.012em; }
.hint b { font-weight: 600; letter-spacing: -.002em; }
.limit { margin-top: 17px; font-size: 24px; line-height: 32px; letter-spacing: -.006em; }
.selected { margin-top: 16px; font-size: 28px; line-height: 40px; letter-spacing: -.0118em; color: #6b7280; }
.transcript { margin-top: 32px; padding: 33.500px 32px 30.500px; border-radius: 8px; background: #f3f4f6; color: #000; font-size: 32px; line-height: 48px; letter-spacing: -.0235em; white-space: pre; }
.actions { display: flex; justify-content: space-between; margin-top: 32px; }
.btn { height: 80px; border: 0; border-radius: 8px; padding: 0; color: #fff; font-size: 32px; letter-spacing: -.0245em; white-space: nowrap; }
.btn.blue { background: #3b82f6; width: 308px; }
.btn.green { background: #2fc668; width: 392px; letter-spacing: -.019em; }

/* dock */
.behind { height: 8px; margin: 0 42px 2px 84px; flex: none; background: #3d3d3e; border-top: 1px solid #000; border-radius: 0 0 16px 16px; box-shadow: 0 0 8px 4px #000; }
.dock {
  height: 88px; flex: none; margin: 0 53px; border: 2px solid rgba(160,165,150,.55); border-radius: 26px;
  background: linear-gradient(90deg, #62705f 0, #5a6a64 350px, #6b635c 680px, #7a6355 980px, #62695c 1220px, #607060 1450px, #686c68 1700px, #6a6a6a 1870px, #6e7064 2080px, #756e60 2300px, #86705a 2450px, #8f7155 2560px, #655a55 2720px);
  display: flex; align-items: flex-start; padding: 12px 0 0 2px;
}
.apps { display: grid; grid-auto-flow: column; grid-auto-columns: 69.300px; }
.second { grid-auto-columns: 69.240px; }
.app { height: 70px; position: relative; display: flex; flex-direction: column; align-items: center; justify-content: space-between; }
.app svg { width: 54px; height: 54px; overflow: visible; filter: drop-shadow(0 1px 1px rgba(0,0,0,.3)); }
.app.big svg { width: 64px; height: 64px; margin: -5px 0; }
.app.on::after { content: ""; width: 8px; height: 8px; border-radius: 50%; background: #000; transform: translateX(-1px); }
.app em {
  position: absolute; left: 43px; top: -7px; min-width: 26px; height: 26px; border-radius: 13px; background: #f0392f; color: #fff;
  font: 400 17px/26px Inter, sans-serif; text-align: center; box-shadow: 0 1px 4px rgba(0,0,0,.4);
}
.app em.wide { left: 18px; width: 50px; letter-spacing: -.035em; font-size: 15px; }
.petals { opacity: .85; }
.petals ellipse { mix-blend-mode: multiply; }
.sep { width: 2px; height: 64px; margin: -2px 14px 0 16px; background: #35402f; }
.sep.warm { background: #55402c; margin: -2px 14px 0 17px; }
.minis { display: flex; gap: 4px; padding-top: 12px; }
.mini { width: 66px; display: flex; flex-direction: column; align-items: flex-end; }
.mini span {
  width: 66px; height: 29px; border: 1.500px solid #9aa09c; border-radius: 3px;
  background:
    repeating-linear-gradient(90deg, transparent 0 5px, rgba(26,27,27,.55) 5px 7px) 4px 4px / 32px 20px no-repeat,
    repeating-linear-gradient(#2b5a2c 0 1px, #1a1b1b 1px 3px) 4px 4px / 32px 20px no-repeat, #1c1d1d;
}
.mini u { width: 18px; height: 15px; margin-top: 4px; border-radius: 8px; background: #4d4541; color: #ddd; font: 700 10px/14px Inter, sans-serif; text-align: center; text-decoration: none; }
.trash { margin: -5px 0 0 12px; }
.cal-m { font: 600 12px Inter, sans-serif; fill: #fff; text-anchor: middle; }
.cal-d { font: 300 34px Inter, sans-serif; fill: #1c1c1c; text-anchor: middle; letter-spacing: -1px; }
.tvt { font: 500 20px Inter, sans-serif; fill: #fff; }
.dollar { font: 700 17px "Liberation Mono", monospace; fill: #2fe04d; }
.notion { font: 700 32px "Liberation Serif", serif; fill: #111; text-anchor: middle; }
.office { font: 700 16px Inter, sans-serif; fill: #fff; text-anchor: middle; }
```
